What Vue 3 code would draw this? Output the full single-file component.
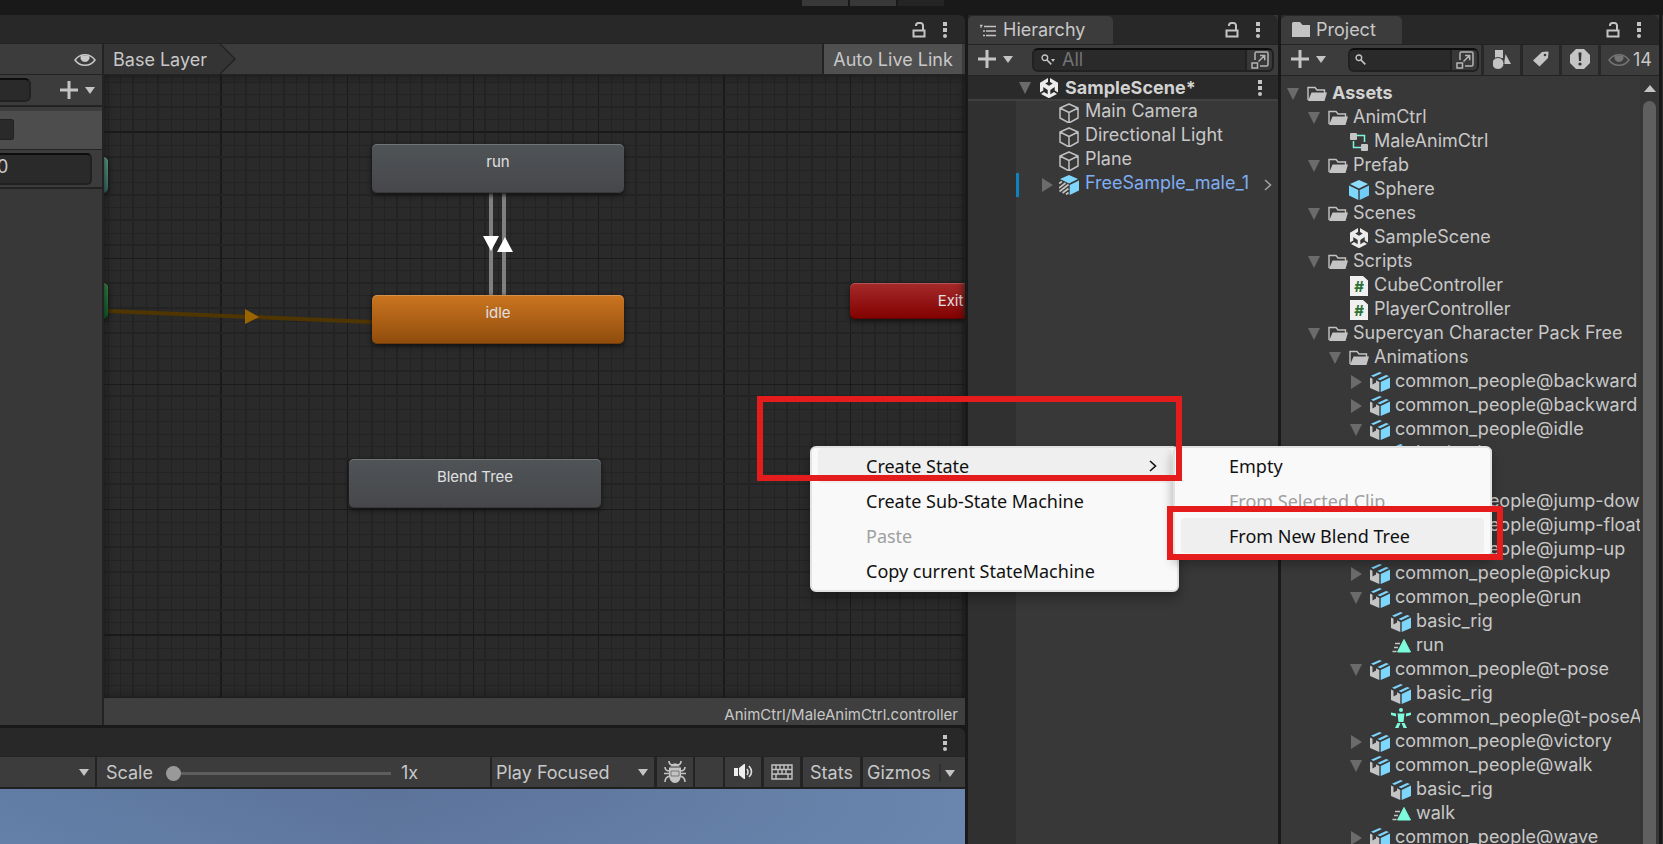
<script setup>
const objects = ['Main Camera', 'Directional Light', 'Plane']

const assets = [
  { d: 0, icon: 'open', open: true, name: 'Assets', bold: true },
  { d: 1, icon: 'open', open: true, name: 'AnimCtrl' },
  { d: 2, icon: 'controller', name: 'MaleAnimCtrl' },
  { d: 1, icon: 'open', open: true, name: 'Prefab' },
  { d: 2, icon: 'prefab', name: 'Sphere' },
  { d: 1, icon: 'open', open: true, name: 'Scenes' },
  { d: 2, icon: 'unity', name: 'SampleScene' },
  { d: 1, icon: 'open', open: true, name: 'Scripts' },
  { d: 2, icon: 'script', name: 'CubeController' },
  { d: 2, icon: 'script', name: 'PlayerController' },
  { d: 1, icon: 'open', open: true, name: 'Supercyan Character Pack Free' },
  { d: 2, icon: 'open', open: true, name: 'Animations' },
  { d: 3, icon: 'model', open: false, name: 'common_people@backward' },
  { d: 3, icon: 'model', open: false, name: 'common_people@backward' },
  { d: 3, icon: 'model', open: true, name: 'common_people@idle' },
  { d: 4, icon: 'model', name: 'basic_rig' },
  { d: 4, icon: 'clip', name: 'idle' },
  { d: 3, icon: 'model', open: false, name: 'common_people@jump-down' },
  { d: 3, icon: 'model', open: false, name: 'common_people@jump-float' },
  { d: 3, icon: 'model', open: false, name: 'common_people@jump-up' },
  { d: 3, icon: 'model', open: false, name: 'common_people@pickup' },
  { d: 3, icon: 'model', open: true, name: 'common_people@run' },
  { d: 4, icon: 'model', name: 'basic_rig' },
  { d: 4, icon: 'clip', name: 'run' },
  { d: 3, icon: 'model', open: true, name: 'common_people@t-pose' },
  { d: 4, icon: 'model', name: 'basic_rig' },
  { d: 4, icon: 'avatar', name: 'common_people@t-poseAvatar' },
  { d: 3, icon: 'model', open: false, name: 'common_people@victory' },
  { d: 3, icon: 'model', open: true, name: 'common_people@walk' },
  { d: 4, icon: 'model', name: 'basic_rig' },
  { d: 4, icon: 'clip', name: 'walk' },
  { d: 3, icon: 'model', open: false, name: 'common_people@wave' },
]

// Grid lines of the state machine canvas: ten minor cells per major cell.
const MAJOR = 125.75
function gridLines(origin, length) {
  const lines = []
  for (let k = -12; ; k++) {
    const p = origin + (k * MAJOR) / 10
    if (p > length) break
    if (p < 0) continue
    const f = p - Math.floor(p)
    lines.push({
      at: Math.round(p) - (f > 0.85 || f < 0.2 ? 1 : 0),
      w: f > 0.85 || f < 0.2 ? 2 : 1,
      major: k % 10 === 0,
    })
  }
  return lines.sort((a, b) => a.major - b.major)
}
const columns = gridLines(117, 2600)
const rows = gridLines(57, 1600)
</script>

<template>
  <div class="editor">
    <svg class="defs" aria-hidden="true">
      <symbol id="s-lock" viewBox="0 0 14 16">
        <path d="M1.5 8.5h11v6h-11z M4 4V3.5a2.5 2.5 0 0 1 2.5-2.5h2A2.5 2.5 0 0 1 11 3.5V8" fill="none" stroke="#c4c4c4" stroke-width="2" />
      </symbol>
      <symbol id="s-dots" viewBox="0 0 4 16">
        <path d="M0 0h4v4H0zM0 6h4v4H0z" fill="#c4c4c4" /><circle cx="2" cy="14" r="2" fill="#c4c4c4" />
      </symbol>
      <symbol id="s-plus" viewBox="0 0 18 18">
        <path d="M9 0v18M0 9h18" stroke="#c4c4c4" stroke-width="3" />
      </symbol>
      <symbol id="s-caret" viewBox="0 0 10 7">
        <path d="M0 0h10L5 7z" fill="#c4c4c4" />
      </symbol>
      <symbol id="s-down" viewBox="0 0 14 14"><path d="M1 1h12L7 13z" fill="#6b6b6b" /></symbol>
      <symbol id="s-right" viewBox="0 0 14 14"><path d="M2 0v14l11-7z" fill="#6b6b6b" /></symbol>
      <symbol id="s-eye" viewBox="0 0 22 14">
        <path d="M1 7C6 0 16 0 21 7 16 14 6 14 1 7z" fill="none" stroke="currentColor" stroke-width="1.5" />
        <path d="M7 2.500h8a4.500 4.500 0 1 1-8 0z" fill="currentColor" />
      </symbol>
      <symbol id="s-search" viewBox="0 0 14 14">
        <circle cx="4.500" cy="4.500" r="3.300" fill="none" stroke="#c4c4c4" stroke-width="1.600" />
        <path d="M7 7l5 5" stroke="#c4c4c4" stroke-width="2" />
      </symbol>
      <symbol id="s-popout" viewBox="0 0 18 18">
        <path d="M4 9V2.500Q4 1 5.500 1h10Q17 1 17 2.500v11q0 1.500-1.500 1.500H9" fill="none" stroke="#b4b4b4" stroke-width="1.500" />
        <path d="M1 12h5.500v5H1z M7.500 10.500l6-6M9 4.500h4.700v4.700" fill="none" stroke="#b4b4b4" stroke-width="1.500" />
      </symbol>
      <symbol id="s-list" viewBox="0 0 16 13">
        <path d="M4 2.500h12M6 7h10M6 11.500h10M3 7h2M3 11.500h2M0 1.500h2.500" stroke="#c4c4c4" stroke-width="1.500" />
        <path d="M1 1v3" stroke="#c4c4c4" />
      </symbol>
      <symbol id="s-folder" viewBox="0 0 18 16">
        <path d="M0 1.500Q0 0 1.500 0H8l2.500 3H18v12H0z" fill="#c4c4c4" />
      </symbol>
      <symbol id="s-open" viewBox="0 0 20 20">
        <path d="M1 16V3.500h7l2 2.500h7.500V9" fill="none" stroke="#c4c4c4" stroke-width="1.400" />
        <path d="M4.500 8.500H20L17.500 17H1z" fill="#c4c4c4" />
      </symbol>
      <symbol id="s-cube" viewBox="0 0 20 20">
        <path d="M10 1l9 4v10l-9 5-9-5V5zM1 5l9 4.500L19 5M10 9.500V20" fill="none" stroke="#c0c0c0" stroke-width="1.500" stroke-linejoin="round" />
      </symbol>
      <symbol id="s-prefab" viewBox="0 0 20 20">
        <path d="M10 0l9 4-9 4.500L1 4z" fill="#8fdcff" />
        <path d="M0 5.500l9.300 4.500v10L0 15.500z" fill="#7fd6fd" /><path d="M20 5.500L10.700 10v10L20 15.500z" fill="#6fcdf7" />
      </symbol>
      <symbol id="s-variant" viewBox="0 0 20 20">
        <path d="M10 0l9 4-9 4.500L1 4z" fill="#7fd6fd" /><path d="M20 5.500L10.700 10v10L20 15.500z" fill="#7fd6fd" />
        <path d="M0 8.500l3-2M0 13l6.500-5M0.500 16.500l9-7M3.500 18L9.500 13.500M7 19.500l2.500-2" stroke="#c4c4c4" stroke-width="1.700" />
      </symbol>
      <symbol id="s-model" viewBox="0 0 20 20">
        <path d="M0 5.500l2.500 1.200v5.800l3.500-2 0-2.200 3.300 1.600V20L0 16z" fill="#c4c4c4" />
        <path d="M1 3.800L9.500 0l2.500 1-8.500 4zM7.500 6.900L16 2.900l3 1.200-8.800 4.200z" fill="#7fd6fd" />
        <path d="M20 5.500L10.700 10v10L20 16z" fill="#7fd6fd" />
      </symbol>
      <symbol id="s-unity" viewBox="0 0 20 20">
        <path d="M9 0v4L6.200 5.600 10 7.800l3.800-2.200L11 4V0l8 4.700v9.800l-3.300-2V9.100L11.300 12v4.300L15 14l3 2-8 4.200L2 16l3-2 3.700 2.300V12L4.300 9.100v3.400L1 14.500V4.700z" fill="#ececec" />
      </symbol>
      <symbol id="s-script" viewBox="0 0 20 20">
        <path d="M1 0h13l5 4.500V20H1z" fill="#f0f0f0" />
        <text x="10" y="16" text-anchor="middle" font-family="Inter, sans-serif" font-size="15" font-weight="700" fill="#2c7036">#</text>
      </symbol>
      <symbol id="s-controller" viewBox="0 0 20 20">
        <path d="M8 3.500h7.500V10M4.500 9v6.500H12" fill="none" stroke="#7df5dc" stroke-width="1.500" />
        <rect x="1" y="1" width="7" height="7" rx="1" fill="#c4c4c4" /><rect x="12" y="12" width="7" height="7" rx="1" fill="#c4c4c4" />
      </symbol>
      <symbol id="s-clip" viewBox="0 0 20 20">
        <path d="M13 3.500L19.500 16H6.500z" fill="#7dfbdc" stroke="#7dfbdc" stroke-linejoin="round" />
        <path d="M4 7.500h5M3 11.500h4M1.500 15.500h4" stroke="#c4c4c4" stroke-width="1.400" />
      </symbol>
      <symbol id="s-avatar" viewBox="0 0 20 20">
        <g fill="#7dfbdc"><circle cx="10" cy="2" r="2" /><path d="M6.500 5.500h7L12.500 14h-5zM0 4.500l5 1v3l-5-1.500zM20 4.500l-5 1v3l5-1.500zM6.500 15h3l-2 5H4zM13.500 15h-3l2 5H16z" /></g>
      </symbol>
      <symbol id="s-shapes" viewBox="0 0 18 19">
        <g fill="#c4c4c4"><path d="M2 0h8v8H2zM12.500 4L18 14h-7z" /><circle cx="5" cy="13.500" r="6" stroke="#3c3c3c" /></g>
      </symbol>
      <symbol id="s-tag" viewBox="0 0 16 16">
        <path d="M9 1l5.500-.5q1 0 1 1L15 7l-8.500 8.500L0 9.500z" fill="#c4c4c4" /><circle cx="12" cy="4" r="1.300" fill="#3c3c3c" />
      </symbol>
      <symbol id="s-alert" viewBox="0 0 20 20">
        <path d="M6 0h8l6 6v8l-6 6H6l-6-6V6z" fill="#c4c4c4" /><path d="M8.500 3.500h3L11 12H9z" fill="#333" /><circle cx="10" cy="15" r="1.600" fill="#333" />
      </symbol>
      <symbol id="s-bug" viewBox="0 0 22 22">
        <path d="M5 0q0 4 4 4M17 0q0 4-4 4M1 6q0 4 5 4M21 6q0 4-5 4M0 12.500h22M1 21q0-5 5-6M21 21q0-5-5-6" fill="none" stroke="#c4c4c4" stroke-width="1.600" />
        <path d="M6 5.500q5-6.500 10 0zM5 6.500h12v8.500q-1 7-6 7t-6-7z" fill="#c4c4c4" /><path d="M7 10h8v5H7z" fill="none" stroke="#777" />
      </symbol>
      <symbol id="s-speaker" viewBox="0 0 19 16">
        <path d="M0 4h4v8H0zM5 4l5-4h1v15h-1l-5-4z" fill="#eee" /><path d="M13 5q2 3 0 6M15 2q5 6 0 11" fill="none" stroke="#ddd" stroke-width="1.600" />
      </symbol>
      <symbol id="s-keys" viewBox="0 0 22 16">
        <path d="M1 1h20v14H1zM1 5.500h20M1 10h20M5 1v4.500M9 1v4.500M13 1v4.500M17 1v4.500M7 5.500V10M11 5.500V10M15 5.500V10M5 10v5M17 10v5" fill="none" stroke="#c4c4c4" stroke-width="1.400" />
      </symbol>
      <symbol id="s-chevron" viewBox="0 0 8 12"><path d="M1 1l5.500 5L1 11" fill="none" stroke="currentColor" stroke-width="1.600" /></symbol>
    </svg>

    <header class="strip"><i></i><i></i><i class="dim"></i></header>

    <main class="panes">
      <section class="left">
        <div class="tabs rounded">
          <button class="ic" aria-label="Lock animator"><svg class="lock"><use href="#s-lock" /></svg></button>
          <button class="ic" aria-label="Animator menu"><svg class="dots"><use href="#s-dots" /></svg></button>
        </div>
        <div class="animator">
          <aside class="layers">
            <div class="layer-bar end"><button class="ic" aria-label="Toggle parameters"><svg class="eye"><use href="#s-eye" /></svg></button></div>
            <div class="layer-bar search-bar">
              <input class="cut-search" aria-label="Search parameters" />
              <button class="ic add" aria-label="Add parameter"><svg class="plus"><use href="#s-plus" /></svg><svg class="caret"><use href="#s-caret" /></svg></button>
            </div>
            <div class="param selected"><input class="mini" aria-label="Parameter name" /></div>
            <div class="param value"><input class="number" aria-label="Parameter value" value="0" /></div>
          </aside>
          <div class="graph">
            <div class="crumbs">
              <button class="crumb">Base Layer</button>
              <svg class="crumb-tip" viewBox="0 0 18 30"><path d="M0 0l15 15L0 30z" fill="#343434" /><path d="M0 0l15 15L0 30" fill="none" stroke="#232323" stroke-width="1.500" /></svg>
              <button class="live">Auto Live Link</button>
            </div>
            <div class="canvas">
              <svg class="grid" shape-rendering="crispEdges">
                <rect v-for="(l, i) in columns" :key="'c' + i" :x="l.at" y="0" :width="l.w" height="100%" :class="{ major: l.major }" />
                <rect v-for="(l, i) in rows" :key="'r' + i" x="0" :y="l.at" width="100%" :height="l.w" :class="{ major: l.major }" />
              </svg>
              <svg class="grid">
                <path d="M4 236L268 247" stroke="#4f3500" stroke-width="4" />
                <path d="M141 234v15l14-7z" fill="#9a6500" />
                <path d="M387 118v102M400 118v102" stroke="#808080" stroke-width="4" />
                <path d="M379 161h16l-8 15zM393 177h16l-8-15z" fill="#fff" />
              </svg>
              <div class="node any"></div>
              <div class="node entry"></div>
              <div class="node run">run</div>
              <div class="node idle">idle</div>
              <div class="node blend">Blend Tree</div>
              <div class="node exit">Exit</div>
            </div>
            <footer class="path">AnimCtrl/MaleAnimCtrl.controller</footer>
          </div>
        </div>
        <div class="tabs rounded game-tabs">
          <button class="ic" aria-label="Game menu"><svg class="dots"><use href="#s-dots" /></svg></button>
        </div>
        <div class="game-bar">
          <button class="cell aspect" aria-label="Aspect ratio"><svg class="caret"><use href="#s-caret" /></svg></button>
          <div class="cell scale">
            <label for="scale">Scale</label>
            <input id="scale" type="range" min="1" max="5" value="1" />
            <span>1x</span>
          </div>
          <div class="cell focus">
            <select aria-label="Play mode"><option>Play Focused</option></select>
            <svg class="caret"><use href="#s-caret" /></svg>
          </div>
          <button class="cell sq first" aria-label="Debug"><svg width="22" height="22"><use href="#s-bug" /></svg></button>
          <div class="cell blank"></div>
          <button class="cell sq" aria-label="Mute audio"><svg width="19" height="16"><use href="#s-speaker" /></svg></button>
          <button class="cell sq gap" aria-label="Shortcuts"><svg width="22" height="16"><use href="#s-keys" /></svg></button>
          <button class="cell stats gap">Stats</button>
          <button class="cell gizmos gap"><span>Gizmos</span><svg class="caret"><use href="#s-caret" /></svg></button>
        </div>
        <div class="sky"></div>
      </section>

      <section class="hierarchy">
        <div class="tabs rounded">
          <button class="tab h-tab"><svg width="16" height="13"><use href="#s-list" /></svg>Hierarchy</button>
          <button class="ic push" aria-label="Lock hierarchy"><svg class="lock"><use href="#s-lock" /></svg></button>
          <button class="ic" aria-label="Hierarchy menu"><svg class="dots"><use href="#s-dots" /></svg></button>
        </div>
        <div class="tools">
          <button class="ic add" aria-label="Create object"><svg class="plus"><use href="#s-plus" /></svg><svg class="caret"><use href="#s-caret" /></svg></button>
          <div class="search h-search">
            <svg width="12" height="12"><use href="#s-search" /></svg><svg class="tiny"><use href="#s-caret" /></svg>
            <input aria-label="Search hierarchy" placeholder="All" />
            <button aria-label="Open search"><svg width="18" height="18"><use href="#s-popout" /></svg></button>
          </div>
        </div>
        <div class="scene">
          <button class="ic" aria-label="Collapse scene"><svg class="fold"><use href="#s-down" /></svg></button>
          <svg class="glyph"><use href="#s-unity" /></svg>
          <strong>SampleScene*</strong>
          <button class="ic push" aria-label="Scene menu"><svg class="dots"><use href="#s-dots" /></svg></button>
        </div>
        <div class="objects">
          <ul>
            <li v-for="o in objects" :key="o"><svg class="glyph"><use href="#s-cube" /></svg><span>{{ o }}</span></li>
            <li class="instance">
              <button class="ic" aria-label="Expand"><svg class="fold"><use href="#s-right" /></svg></button>
              <svg class="glyph"><use href="#s-variant" /></svg><span>FreeSample_male_1</span>
              <svg class="chev"><use href="#s-chevron" /></svg>
            </li>
          </ul>
        </div>
      </section>

      <section class="project">
        <div class="tabs rounded">
          <button class="tab p-tab"><svg width="18" height="16"><use href="#s-folder" /></svg>Project</button>
          <button class="ic push" aria-label="Lock project"><svg class="lock"><use href="#s-lock" /></svg></button>
          <button class="ic" aria-label="Project menu"><svg class="dots"><use href="#s-dots" /></svg></button>
        </div>
        <div class="tools">
          <button class="ic add" aria-label="Create asset"><svg class="plus"><use href="#s-plus" /></svg><svg class="caret"><use href="#s-caret" /></svg></button>
          <div class="search p-search">
            <svg width="12" height="12"><use href="#s-search" /></svg>
            <input aria-label="Search project" />
            <button aria-label="Open search"><svg width="18" height="18"><use href="#s-popout" /></svg></button>
          </div>
          <button class="filter" aria-label="Search by type"><svg width="18" height="19"><use href="#s-shapes" /></svg></button>
          <button class="filter" aria-label="Search by label"><svg width="16" height="16"><use href="#s-tag" /></svg></button>
          <button class="filter" aria-label="Import log"><svg width="20" height="20"><use href="#s-alert" /></svg></button>
          <button class="filter hidden-count"><svg class="eye"><use href="#s-eye" /></svg>14</button>
        </div>
        <div class="assets">
          <ul>
            <li v-for="(a, i) in assets" :key="i" :class="['d' + a.d, { bold: a.bold }]">
              <button v-if="a.open !== undefined" class="ic" :aria-label="'Toggle ' + a.name"><svg class="fold"><use :href="a.open ? '#s-down' : '#s-right'" /></svg></button>
              <i v-else class="fold"></i>
              <svg class="glyph"><use :href="'#s-' + a.icon" /></svg>
              <span>{{ a.name }}</span>
            </li>
          </ul>
          <div class="bar"><svg viewBox="0 0 12 7" width="12" height="7"><path d="M0 7h12L6 0z" fill="#c4c4c4" /></svg><div class="thumb"></div></div>
        </div>
      </section>
      <div class="sliver"></div>
    </main>

    <div class="menu context" role="menu">
      <button class="hot" role="menuitem">Create State<svg width="8" height="12"><use href="#s-chevron" /></svg></button>
      <button role="menuitem">Create Sub-State Machine</button>
      <button role="menuitem" disabled>Paste</button>
      <button role="menuitem">Copy current StateMachine</button>
    </div>
    <div class="menu sub" role="menu">
      <button role="menuitem">Empty</button>
      <button role="menuitem" disabled>From Selected Clip</button>
      <button class="hot" role="menuitem">From New Blend Tree</button>
    </div>
    <div class="mark one"></div>
    <div class="mark two"></div>
  </div>
</template>

<style>
body { margin: 0; background: #191919; }
</style>

<style scoped>
* { box-sizing: border-box; }
.editor {
  position: relative; height: 100vh; overflow: hidden; display: flex; flex-direction: column;
  background: #191919; color: #c8c8c8; font: 18px/24px Inter, "Liberation Sans", sans-serif;
}
.defs { position: absolute; width: 0; height: 0; }
button, input, select { font: inherit; color: inherit; margin: 0; padding: 0; border: 0; background: none; border-radius: 0; outline: 0; appearance: none; }
button { white-space: nowrap; }
svg { display: block; flex: none; overflow: visible; }
ul { list-style: none; margin: 0; padding: 0; }
.ic { display: flex; align-items: center; flex: none; }
.lock { width: 14px; height: 16px; }
.dots { width: 4px; height: 16px; }
.plus { width: 18px; height: 18px; }
.caret { width: 10px; height: 7px; }
.eye { width: 22px; height: 14px; }
.fold { width: 14px; height: 14px; flex: none; }
.glyph { width: 20px; height: 20px; }
.add { gap: 7px; }
.push { margin-left: auto; }

.strip { flex: 0 0 15px; display: flex; gap: 2px; padding-left: 802px; }
.strip i { width: 46px; height: 6px; background: #383838; }
.strip .dim { background: #242424; }
.panes { flex: 1; min-height: 0; display: grid; grid-template-columns: minmax(0, 1fr) 310px 378px 1px; gap: 3px; }
section { min-width: 0; min-height: 0; display: flex; flex-direction: column; }
.tabs { flex: 0 0 29px; display: flex; align-items: center; justify-content: flex-end; gap: 17px; padding: 1px 18px 0 0; background: #282828; border-bottom: 1px solid #232323; }
.rounded { border-radius: 0 6px 0 0; }
.tab { align-self: stretch; display: flex; align-items: center; background: #3c3c3c; border-radius: 5px 5px 0 0; height: 28px; }
.h-tab { width: 145px; gap: 7px; padding-left: 12px; }
.p-tab { width: 121px; gap: 6px; padding-left: 11px; }
.sliver { background: #303030; }

.animator { flex: 1; min-height: 0; display: flex; }
.layers { flex: 0 0 104px; background: #383838; border-right: 2px solid #232323; overflow: hidden; }
.layer-bar { height: 31px; display: flex; align-items: center; background: #3c3c3c; border-bottom: 1px solid #232323; }
.layer-bar.end { justify-content: flex-end; padding: 2px 6px 0 0; }
.search-bar { height: 32px; border-bottom-width: 2px; justify-content: space-between; padding-right: 7px; }
.cut-search { width: 31px; height: 24px; background: #2a2a2a; border: 2px solid #212121; border-top-color: #0d0d0d; border-left: 0; border-radius: 0 6px 6px 0; }
.param { border-bottom: 1px solid #232323; display: flex; align-items: center; }
.selected { height: 43px; padding-bottom: 2px; background: #4d4d4d; border-top: 4px solid #3c3c3c; }
.mini { width: 14px; height: 21px; background: #2a2a2a; border: 1px solid #212121; border-left: 0; border-radius: 0 3px 3px 0; }
.value { height: 39px; background: #3c3c3c; border-bottom-width: 2px; }
.number { width: 92px; height: 32px; padding: 0 0 4px; text-indent: -3px; background: #2a2a2a; border: 2px solid #212121; border-top-color: #0d0d0d; border-left: 0; border-radius: 0 5px 5px 0; }

.graph { flex: 1; min-width: 0; display: flex; flex-direction: column; }
.crumbs { flex: 0 0 31px; display: flex; background: #3c3c3c; border-bottom: 1px solid #232323; padding-right: 3px; }
.crumb { width: 116px; padding: 2px 0 0 9px; text-align: left; background: #343434; }
.crumb-tip { width: 18px; height: 30px; }
.live { margin-left: auto; width: 140px; padding-top: 2px; background: #505050; border-left: 2px solid #232323; }
.canvas { position: relative; flex: 1; min-height: 0; overflow: hidden; background: #2a2a2a; }
.grid { position: absolute; inset: 0; width: 100%; height: 100%; }
.grid rect { fill: #232323; }
.grid rect.major { fill: #1a1a1a; }
.canvas::after { content: ""; position: absolute; inset: 0; box-shadow: inset 0 0 8px #181818; }
.node { position: absolute; width: 252px; height: 49px; padding-top: 7px; border-radius: 5px; text-align: center; font-size: 15px; line-height: 22px; color: #e0e0e0; box-shadow: 0 2px 5px #111, inset 0 1px 0 #ffffff33, inset 0 -1px 0 #00000033; }
.run, .blend { background: linear-gradient(#4f5457, #47474b); }
.run { left: 268px; top: 69px; }
.idle { left: 268px; top: 220px; background: linear-gradient(#cb7520, #8f4c0d); }
.blend { left: 245px; top: 384px; }
.exit { left: 746px; top: 208px; width: 201px; height: 36px; background: linear-gradient(#a52a2a, #820000); }
.any, .entry { left: -197px; width: 201px; height: 36px; }
.any { top: 82px; background: linear-gradient(#5fae92, #3a706a); }
.entry { top: 208px; background: linear-gradient(#2f8f45, #0a6128); }
.path { flex: 0 0 27px; background: #3f3f3f; padding: 7px 7px 0 0; text-align: right; font-size: 15px; line-height: 20px; }

.game-tabs { margin-top: 3px; }
.game-bar { flex: 0 0 32px; display: flex; background: #232323; border-bottom: 2px solid #202020; }
.cell { display: flex; align-items: center; justify-content: center; background: #3c3c3c; }
.aspect { width: 95px; justify-content: flex-end; padding-right: 6px; margin-right: 2px; }
.scale { flex: 1; justify-content: flex-start; padding: 2px 0 0 9px; margin-right: 2px; }
.scale label { width: 60px; }
.scale input { width: 225px; height: 15px; margin-right: 10px; background: linear-gradient(#5e5e5e, #5e5e5e) center / 100% 3px no-repeat; }
.scale input::-webkit-slider-thumb { appearance: none; width: 15px; height: 15px; border-radius: 50%; background: #999; }
.focus { width: 162px; padding: 0 6px 0 4px; }
.focus select { flex: 1; min-width: 0; height: 30px; padding-top: 2px; }
.sq { width: 36px; }
.first { margin: 0 2px 0 3px; }
.blank { width: 28px; margin-right: 2px; }
.gap { margin-left: 3px; }
.stats { width: 57px; padding-top: 2px; }
.gizmos { width: 102px; justify-content: space-between; padding: 2px 10px 0 4px; }
.gizmos span { padding-right: 8px; line-height: 18px; border-right: 2px solid #303030; }
.sky { flex: 0 0 55px; background: linear-gradient(4deg, #7090b540, transparent 70%), linear-gradient(95deg, #607ba3, #5c7299 40%, #6a86ae); }

.hierarchy, .project { background: #383838; }
.tools { flex: 0 0 31px; display: flex; align-items: center; padding-left: 10px; background: #3c3c3c; border-bottom: 1px solid #232323; }
.tools .add { height: 28px; align-self: flex-start; }
.h-search, .p-search { flex: none; }
.search { display: flex; align-items: center; height: 24px; padding-left: 7px; background: #2a2a2a; border: 2px solid #212121; border-top-color: #0d0d0d; border-radius: 6px; }
.search input { flex: 1; min-width: 0; height: 20px; }
.search input::placeholder { color: #747474; opacity: 1; }
.search button { width: 27px; height: 20px; display: flex; align-items: center; justify-content: center; background: #383838; border-left: 2px solid #212121; border-radius: 0 4px 4px 0; }
.tiny { width: 4px; height: 3px; margin: 0 7px 0 -2px; }
.h-search { width: 242px; margin-left: 19px; }
.p-search { width: 131px; margin: 0 2px 0 22px; padding-left: 5px; }
.filter { flex: none; align-self: stretch; width: 39px; padding-bottom: 2px; display: flex; align-items: center; justify-content: center; border-left: 3px solid #282828; }
.hidden-count { flex: 1; min-width: 0; gap: 3px; padding-bottom: 0; }
.hidden-count .eye { color: #747474; }
.scene { flex: 0 0 25px; display: flex; align-items: center; padding: 0 16px 0 50px; background: #2a2a2a; border-bottom: 2px solid #404040; color: #d2d2d2; }
.scene .glyph { margin: 0 6px 0 7px; }
.scene strong { font-weight: 700; line-height: 22px; }
.objects { flex: 1; border-left: 48px solid #303030; }
.objects li { height: 24px; display: flex; align-items: center; padding-left: 43px; }
.objects li .glyph { margin-right: 6px; }
.objects span { flex: 1; min-width: 0; height: 24px; line-height: 20px; overflow: hidden; white-space: nowrap; }
.objects .instance { padding: 0 6px 0 21px; border-left: 3px solid #0f81be; color: #7fadf2; }
.instance .ic { margin-right: 5px; }
.chev { width: 8px; height: 12px; margin-left: 11px; color: #a0a0a0; }

.assets { flex: 1; min-height: 0; display: flex; overflow: hidden; }
.assets ul { flex: 1; min-width: 0; padding-top: 6px; overflow: hidden; }
.assets li { height: 24px; display: flex; align-items: center; padding-left: 5px; white-space: nowrap; }
.assets span { height: 24px; line-height: 22px; }
.assets .glyph { margin: 0 5px 0 7px; }
.assets li.d1 { padding-left: 26px; }
.assets li.d2 { padding-left: 47px; }
.assets li.d3 { padding-left: 68px; }
.assets li.d4 { padding-left: 89px; }
.bold { font-weight: 700; color: #d2d2d2; }
.bar { flex: 0 0 19px; display: flex; flex-direction: column; align-items: center; gap: 9px; padding-top: 9px; background: #353535; }
.thumb { width: 13px; flex: 1; border-radius: 7px 7px 0 0; background: #5f5f5f; }

.menu { position: absolute; top: 446px; padding: 0 6px 2px; background: #f9f9f9; border: 2px solid #e2e2e2; border-radius: 6px; box-shadow: 0 6px 12px #00000055; color: #111; font: 18px/24px "Noto Sans", "Open Sans", sans-serif; }
.menu button { width: 100%; height: 35px; padding: 0 14px 0 48px; display: flex; align-items: center; justify-content: space-between; border-radius: 4px; }
.menu button:disabled { color: #a0a0a0; }
.menu .hot { background: #efefef; }
.context { left: 810px; width: 369px; }
.sub { left: 1173px; width: 319px; }
.mark { position: absolute; border: 6px solid #e51c1c; }
.one { left: 757px; top: 396px; width: 425px; height: 85px; }
.two { left: 1167px; top: 506px; width: 336px; height: 54px; }
</style>
